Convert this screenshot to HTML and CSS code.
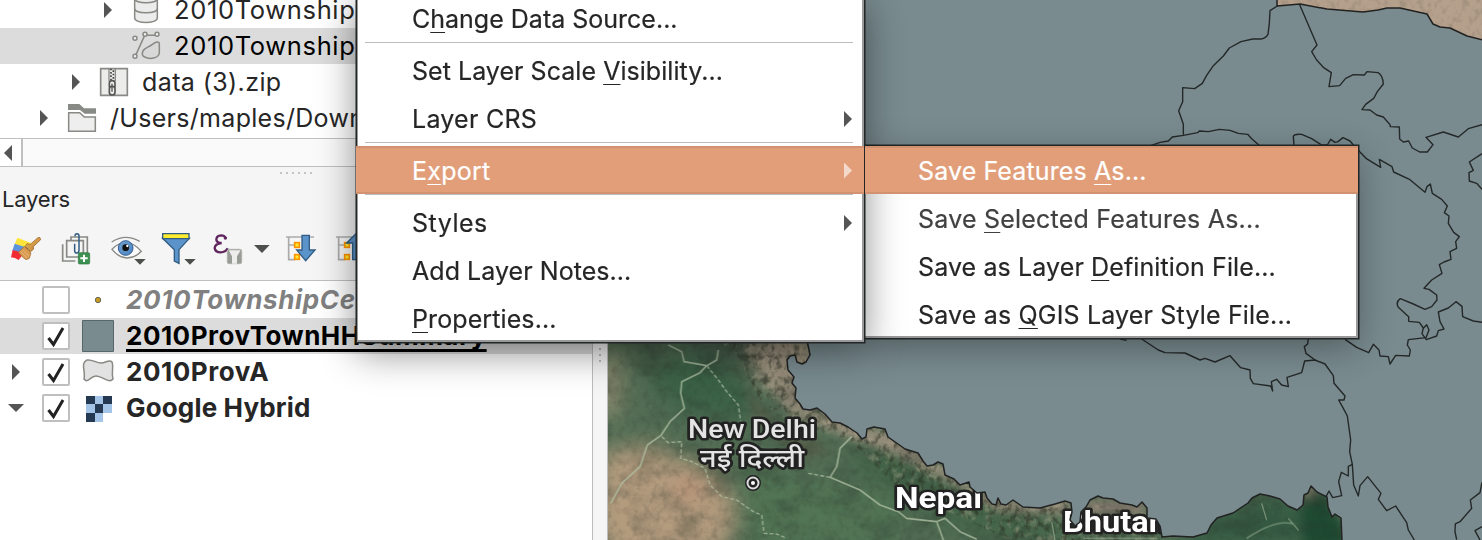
FILE: index.html
```
<!DOCTYPE html>
<html lang="en">
<head>
<meta charset="utf-8">
<title>Layers</title>
<link rel="stylesheet" href="styles.css">
</head>
<body>
<div class="app">
  <aside class="side">
    <div class="browser">
      <div class="row lv3"><i class="tri"></i>
        <svg class="ico" viewBox="0 0 84 84"><path d="M8 8v58c0 18 68 18 68 0V8" fill="#ececec" stroke="#888a85" stroke-width="4.5"/><path d="M8 8c0 16 68 16 68 0M8 38c0 16 68 16 68 0" fill="none" stroke="#888a85" stroke-width="4.5"/></svg>
        <span class="t1">2010TownshipC</span></div>
      <div class="row lv3 sel"><i class="tri none"></i>
        <svg class="ico" viewBox="0 0 84 84"><g fill="#eee" stroke="#888a85" stroke-width="4.5"><path d="M11 70L38 10H72" fill="none"/><circle cx="9" cy="19" r="6"/><circle cx="9" cy="73" r="6"/><circle cx="39" cy="7" r="6"/><circle cx="75" cy="7" r="6"/><path fill="#d8d8d8" d="M32 59C36 47 49 47 61 37C70 30 82 25 82 37V63C80 79 53 83 38 75C30 71 30 65 32 59Z"/></g></svg>
        <span class="t1">2010TownshipC</span></div>
      <div class="row lv2"><i class="tri"></i>
        <svg class="ico" viewBox="0 0 84 84"><path d="M2 2h80v80H2z" fill="#ececea" stroke="#888a85" stroke-width="5"/><path d="M27 2v38M46 2v38" stroke="#888a85" stroke-width="4"/><path d="M33 2v38" stroke="#444" stroke-width="5" stroke-dasharray="5 5"/><path d="M40 7v33" stroke="#444" stroke-width="5" stroke-dasharray="5 5"/><g fill="#eee" stroke="#555753" stroke-width="5"><rect x="28" y="38" width="17" height="24" rx="8"/><rect x="28" y="55" width="17" height="26" rx="8"/></g><path d="M36 47v24" stroke="#555" stroke-width="4"/></svg>
        <span class="t2">data (3).zip</span></div>
      <div class="row lv1"><i class="tri"></i>
        <svg class="ico" viewBox="0 0 84 84"><path d="M0 0h34l14 13h36v16H50L36 18H0z" fill="#888a85"/><path d="M2 26h33l14 13h33v43H2z" fill="#eee" stroke="#888a85" stroke-width="4.5"/></svg>
        <span class="t3">/Users/maples/Down</span></div>
    </div>
    <div class="scroll"><div class="scroll-btn"><i class="tri left"></i></div></div>
    <div class="dots"></div>
    <h2>Layers</h2>
    <div class="tools">
      <svg viewBox="0 0 540 150" width="180" height="50">
        <defs>
          <linearGradient id="bl" x2="1" y2="1"><stop offset="0" stop-color="#729fcf"/><stop offset="1" stop-color="#4a86c0"/></linearGradient>
          <linearGradient id="br" x2="1" y2="1"><stop offset="0" stop-color="#e8b868"/><stop offset="1" stop-color="#bf7c2c"/></linearGradient>
        </defs>
        <path d="M52 38L94 54L82 74L44 58z" fill="#ffe53b"/><path d="M44 56L84 69L76 87L37 77z" fill="#5b94dc"/><path d="M38 75L72 84L56 105Q45 98 33 97z" fill="#f22c35"/>
        <path d="M120 38Q114 36 110 41L91 58L81 56L76 64L92 80L101 72L100 65L122 44Z" fill="url(#br)" stroke="#8d5717" stroke-width="2"/><path d="M73 64L93 84L88 100L78 104Q66 97 55 82z" fill="#d99b52" stroke="#9b632b" stroke-width="2"/><path d="M62 80L81 99M69 76L87 94" stroke="#f0c58a" stroke-width="2"/>
        <g fill="#f5f5f5" stroke="#888a85" stroke-width="5"><path d="M188 58v50h38" fill="none"/><path d="M213 36h49v52h-49z"/><path d="M200 47h50v49h-50z"/></g>
        <path d="M224 56v21q0 7 6 7t7-7V33q0-7-6-7t-6 8" fill="none" stroke="#315d84" stroke-width="4.5"/>
        <rect x="235" y="83" width="34" height="34" rx="4" fill="#3d9150" stroke="#2a763e" stroke-width="2"/><path d="M252 89v22M241 100h22" stroke="#fff" stroke-width="6"/>
        <path d="M336 73Q355 53 378 53T424 79Q405 99 381 99T336 73Z" fill="#fafafa" stroke="#888a85" stroke-width="4"/><path d="M335 51Q375 24 419 49" fill="none" stroke="#888a85" stroke-width="4"/><circle cx="377" cy="69" r="22" fill="url(#bl)" stroke="#315d94" stroke-width="3"/><circle cx="377" cy="68" r="10" fill="#111"/><circle cx="382" cy="63" r="3.5" fill="#fff"/><path d="M403 102h34l-17 17z" fill="#4c4f4c"/>
      </svg>
      <svg viewBox="0 0 540 150" width="180" height="50">
        <path d="M-52 40H28L-3 74V115L-17 108V74Z" fill="#5b94ca" stroke="#315d84" stroke-width="4"/><path d="M-52 26h79v15h-79z" fill="#fcec2d" stroke="#315d84" stroke-width="4"/><path d="M13 102h34l-17 17z" fill="#4c4f4c"/>
        <path d="M137 41Q135 31 123 31Q109 32 109 44Q110 54 125 54Q105 56 104 69Q106 82 122 82Q137 82 143 70" fill="none" stroke="#62265f" stroke-width="7"/><circle cx="136" cy="39" r="5" fill="#62265f"/>
        <rect x="142" y="73" width="43" height="43" rx="5" fill="#999b97" stroke="#adafaa" stroke-width="3"/><path d="M146 76h36L171 94v22h-15V94z" fill="#ededeb"/>
        <path d="M222 60h47l-23 24z" fill="#4c4f4c"/>
        <g id="tree"><path d="M318 36h84M326 36v68h19M326 60h20" fill="none" stroke="#aaa" stroke-width="5"/><rect x="344" y="53" width="14" height="14" fill="#fcec2d" stroke="#ff9200" stroke-width="5"/><rect x="344" y="89" width="14" height="14" fill="#fcec2d" stroke="#ff9200" stroke-width="5"/></g>
        <path d="M366 31h22v44h17l-28 32-27-32h16z" fill="#5b94ca" stroke="#315d84" stroke-width="4"/>
        <use href="#tree" x="150"/><path d="M500 54l28-28 28 28h-16v50h-22V54z" fill="#5b94ca" stroke="#315d84" stroke-width="4"/>
      </svg>
    </div>
    <div class="layers">
      <div class="lrow"><i class="arr"></i><span class="box"></span>
        <svg class="sym" viewBox="0 0 32 32"><circle cx="16" cy="16" r="2.7" fill="#c99c20" stroke="#676756"/></svg>
        <span class="off">2010TownshipCe</span></div>
      <div class="lrow sel"><i class="arr"></i><span class="box"><svg viewBox="0 0 28 28"><path d="M6.5 16l5 6.5L21 6" /></svg></span>
        <svg class="sym" viewBox="0 0 32 32"><path d="M.5.5h31v31H.5z" fill="#798b8f" stroke="#56676c"/></svg>
        <span class="cur">2010ProvTownHHSummary</span></div>
      <div class="lrow"><i class="arr"><i class="tri"></i></i><span class="box"><svg viewBox="0 0 28 28"><path d="M6.5 16l5 6.5L21 6" /></svg></span>
        <svg class="sym" viewBox="0 0 32 32"><path d="M5 4C10 3 14 7 19 7S27 3 30 6C32 11 29 17 31 23C27 28 20 20 14 20S6 28 2 23C4 16-2 7 5 4Z" fill="#e2e2e2" stroke="#888a85" stroke-width="1.5"/></svg>
        <span class="provA">2010ProvA</span></div>
      <div class="lrow"><i class="arr"><i class="tri down"></i></i><span class="box"><svg viewBox="0 0 28 28"><path d="M6.5 16l5 6.5L21 6" /></svg></span>
        <svg class="sym" viewBox="0 0 32 32"><path d="M4 4h26v17H21v9H4z" fill="#a5c5e8"/><path d="M4 4h9v8H4zM21 4h9v8h-9zM13 12h8v9h-8zM4 21h9v9H4z" fill="#253a52"/></svg>
        <span class="hyb">Google Hybrid</span></div>
    </div>
  </aside>
  <div class="split"><i></i></div>
  <main class="map">
    <svg width="874" height="540" viewBox="608 0 874 540">
      <defs>
        <filter id="soft" x="-30%" y="-30%" width="160%" height="160%" color-interpolation-filters="sRGB"><feGaussianBlur stdDeviation="11"/></filter>
        <filter id="soft2" x="-30%" y="-30%" width="160%" height="160%" color-interpolation-filters="sRGB"><feGaussianBlur stdDeviation="5"/></filter>
        <filter id="grain" x="0" y="0" width="100%" height="100%" color-interpolation-filters="sRGB"><feTurbulence type="fractalNoise" baseFrequency=".03 .045" numOctaves="5" seed="7"/><feColorMatrix values="0 0 0 0 .14  0 0 0 0 .18  0 0 0 0 .15  3 0 0 0 -1.3"/></filter>
        <filter id="grain2" x="0" y="0" width="100%" height="100%" color-interpolation-filters="sRGB"><feTurbulence type="fractalNoise" baseFrequency=".13 .11" numOctaves="4" seed="3"/><feColorMatrix values="0 0 0 0 .74  0 0 0 0 .7  0 0 0 0 .6  0 3 0 0 -1.5"/></filter>
        <filter id="grain3" x="0" y="0" width="100%" height="100%" color-interpolation-filters="sRGB"><feTurbulence type="fractalNoise" baseFrequency=".16 .13" numOctaves="3" seed="12"/><feColorMatrix values="0 0 0 0 .17  0 0 0 0 .19  0 0 0 0 .14  0 0 3.4 0 -1.6"/></filter>
        <clipPath id="hills"><path d="M705 330H820V395L890 430L960 480L1060 500L1160 515V540H1010L900 490L850 440L790 425L760 400L740 360Z"/></clipPath>
      </defs>
      <path d="M608 330H1350V540H608z" fill="#526d54"/>
      <g filter="url(#soft)">
        <ellipse cx="665" cy="515" rx="72" ry="58" fill="#af987b"/>
        <path d="M600 452l50-8 50 26 25 80H600z" fill="#b39b7e"/>
        <ellipse cx="690" cy="488" rx="14" ry="10" fill="#bd9077"/>
        <ellipse cx="610" cy="385" rx="13" ry="36" fill="#918f73"/>
        <path d="M645 372L700 350L750 385L760 420L680 412z" fill="#3a6146"/>
        <path d="M740 330H820V400L760 385z" fill="#958b78"/>
        <path d="M740 465L900 500V550H750z" fill="#527555"/>
        <path d="M860 440L990 490L1100 540H980L850 470z" fill="#446549"/>
        <path d="M1190 520l100-30 50 60H1180z" fill="#365c44"/>
        <ellipse cx="725" cy="350" rx="30" ry="16" fill="#465c4b"/>
      </g>
      <g filter="url(#soft2)">
        <path d="M745 345L800 350L800 405L840 420L900 436L960 480L1010 500L1070 500V514L1000 512L945 480L890 452L840 434L790 414Z" fill="#978d7b"/>
        <path d="M745 385l30 36 60 30 -30 8-50-35z" fill="#56624c"/>
        <path d="M1085 500h60v15h-60z" fill="#8a7f72"/>
        <path d="M1300 510l20-22 25 40v20h-40z" fill="#1f4a32"/>
        <path d="M1305 485h12v14h-14z" fill="#777160"/>
      </g>
      <path d="M608 330H1350V540H608z" filter="url(#grain)" opacity=".25"/>
      <path d="M608 330H1350V540H608z" filter="url(#grain3)" opacity=".13"/>
      <g clip-path="url(#hills)"><path d="M608 330H1350V540H608z" filter="url(#grain2)" opacity=".4"/><path d="M608 330H1350V540H608z" filter="url(#grain3)" opacity=".5"/></g>
      <g>
        <path d="M1270 0h212v45h-212z" fill="#b5a08c"/><path d="M1270 0h212v45h-212z" filter="url(#grain3)" opacity=".12"/>
      </g>
      <g transform="translate(590 330) scale(.33333)" fill="none" stroke="#b4c4a8" stroke-width="5" stroke-linejoin="round" opacity=".75">
        <path d="M235 45L275 65L282 95L350 107L380 90L385 60M350 107L330 128L275 155L272 190L283 235L240 275L212 317L172 345L150 410L95 460L62 520"/>
        <path d="M350 107L385 150L410 185L445 225L452 275M215 320L235 338L275 335L272 385L305 395L345 415L360 465L395 500L440 510L490 545L515 555L522 610L560 612L590 625M655 430L720 442" stroke-dasharray="12 6" stroke-width="4"/>
        <path d="M785 320L750 355L740 410L720 442L810 480L870 525L925 545L950 565L1040 575L1065 565L1110 605L1160 628M1040 575L1060 630"/>
        <path d="M1385 575L1395 630M1970 625Q2060 565 2110 582L2125 600L2095 565M2015 520L2030 570M1480 625H1700" stroke-width="4" opacity=".7"/>
      </g>
      <g class="place" text-anchor="middle">
        <text x="752" y="438" font-size="25" textLength="128" lengthAdjust="spacingAndGlyphs">New Delhi</text>
        <text x="752" y="467" font-size="25" textLength="104" lengthAdjust="spacingAndGlyphs">नई दिल्ली</text>
        <g class="country"><text x="938.5" y="507.5" font-size="30" textLength="87" lengthAdjust="spacingAndGlyphs">Nepal</text>
        <text x="1115" y="531.5" font-size="29" textLength="104" lengthAdjust="spacingAndGlyphs">Bhutan</text></g>
      </g>
      <circle cx="753" cy="483" r="6" fill="#222" stroke="#222" stroke-width="4"/><circle cx="753" cy="483" r="5.5" fill="#222" stroke="#ddd" stroke-width="2"/><circle cx="753" cy="483" r="2" fill="#fff"/>
      <path class="land" d="M807 340L810 355 806 362 802 364 797 362 795 355 790 356 787 360 788 370 794 377 792 383 796 388 795 398 800 404 803 409 810 410 817 408 825 414 832 422 840 423 848 427 857 433 862 439 866 437 867 429 874 427 885 429 888 437 898 444 905 449 918 453 923 461 927 466 933 465 938 462 943 464 945 475 954 479 960 485 969 482 970 487 977 493 985 492 987 498 992 504 996 505 998 498 1001 504 1006 505 1013 500 1023 507 1040 508 1055 504 1065 501 1071 503 1072 512 1070 520 1075 526 1080 522 1081 512 1086 507 1090 500 1098 496 1103 498 1113 499 1120 503 1132 505 1137 507 1142 502 1147 508 1147 518 1156 519 1160 526 1162 537 1173 536 1193 537 1207 533 1211 525 1217 518 1233 513 1248 503 1252 498 1260 494 1270 496 1280 499 1288 506 1297 510 1303 505 1304 495 1308 493 1311 486 1317 492 1327 497 1328 507 1332 517 1335 514 1341 518 1342 541H1483V40L1467 36 1450 28 1440 27 1433 24 1427 14 1400 8 1387 8 1378 10 1363 12 1327 9 1300 4 1277 6V-2H600V340Z"/>
      <g class="border">
        <g transform="translate(1160) scale(.33333)">
          <path d="M352 18L330 32 328 70 324 103Q316 116 302 117L278 117 243 125 208 144 190 168 160 197 140 226 127 250 104 266 68 263V305L56 332 70 373V404M418 12L471 135 455 155 470 180 490 202 514 218 507 260 539 257 557 235 580 224 613 225 621 215 654 218Q668 225 670 252L652 275 641 295 617 313 606 329 630 330 650 345 670 351 690 374 691 380 718 381 719 417 730 426 746 423 757 444 779 456 802 456 819 434 798 412 850 396 895 411 925 386 966 374"/>
          <path d="M-100 462L0 427 25 423 37 411 70 406 113 398 118 393 145 395 178 388 210 391 235 400 263 403 275 416 300 438M402 438L400 409Q402 401 425 403L455 416 485 435 502 435 512 418 525 427 534 425 549 413 570 423 583 438 600 455"/>
        </g>
        <g transform="translate(1340 130) scale(.33333)">
          <path d="M60 66L78 85 122 112 118 88 156 110 161 126 210 149 255 187 261 170 271 162 277 190 305 208 322 228 313 248 327 258 325 280 341 307 358 320 347 335 350 355 330 365 333 388 312 396 298 404 306 430 275 450 252 475 267 478 290 495 291 510 275 530 255 538 220 522 181 506Q166 516 175 532L206 560V574L238 577 250 594 246 611 259 629 290 618 295 602 312 597 300 575 295 546 325 534 348 515 366 529 368 560 400 573 426 577"/>
          <path d="M250 595L260 584 267 600 258 623 205 629 202 645 211 660 208 678 167 676 150 702 145 680 120 678 117 660 100 643 86 668 50 652 15 628M426 71L388 96 400 121 387 128 388 153 410 160 426 178"/>
        </g>
        <g transform="translate(1030 330) scale(.33333)">
          <path d="M270 27L290 31M335 27L385 60 405 68 465 69 510 90 525 85 555 96 600 77 632 113 660 120 661 145 670 161 722 168 728 183 724 155 740 148 755 165 775 170 771 142 815 128 824 93 855 90 885 102 910 137 912 160 945 198 942 210 926 210 940 235 952 258 962 330 959 365 967 403 971 465 985 498 990 467 1013 440 1053 490 1045 508 1070 542 1097 528 1130 578 1135 600 1153 630"/>
          <path d="M835 25L833 42 823 50 828 70 855 90M967 403L955 409 955 438 934 427 926 455 935 497 908 503 897 483 888 500M1356 457L1350 488 1321 510 1325 535 1290 575 1276 582 1275 605 1280 629M1356 590L1335 602 1350 630"/>
        </g>
      </g>
    </svg>
  </main>
</div>

<div class="menu sub">
  <div class="item hot"><span class="s1">Save Features <u>A</u>s...</span></div>
  <div class="item dim"><span class="s2">Save <u>S</u>elected Features As...</span></div>
  <div class="item"><span class="s3">Save as Layer <u>D</u>efinition File...</span></div>
  <div class="item"><span class="s4">Save as <u>Q</u>GIS Layer Style File...</span></div>
</div>
<div class="menu main">
  <div class="item"><span class="m1">C<u>h</u>ange Data Source...</span></div>
  <hr>
  <div class="item"><span class="m2">Set Layer Scale <u>V</u>isibility...</span></div>
  <div class="item"><span class="m3">Layer CRS</span><i class="tri"></i></div>
  <hr>
  <div class="item hot"><span class="m4">E<u>x</u>port</span><i class="tri"></i></div>
  <hr>
  <div class="item"><span class="m5">Styles</span><i class="tri"></i></div>
  <div class="item"><span class="m6">Add Layer Notes...</span></div>
  <div class="item"><span class="m7"><u>P</u>roperties...</span></div>
</div>
</body>
</html>
```
FILE: styles.css
```
* { box-sizing: border-box; }
body { margin: 0; width: 1482px; height: 540px; overflow: hidden; position: relative; font: 25px/36px Inter, "Liberation Sans", sans-serif; color: #262626; background: #f5f5f5; }
.app { display: grid; grid-template-columns: 592px 16px 874px; height: 540px; }
.side { overflow: hidden; display: flex; flex-direction: column; white-space: nowrap; }
.side > * { flex: none; }
.browser { height: 138px; background: #fff; overflow: hidden; }
.browser .row:first-child { margin-top: -8px; }
.row { display: flex; align-items: center; height: 36px; }
.sel { background: #dcdcdc; color: #000; }
.lv3 { padding-left: 104px; }
.lv2 { padding-left: 72px; }
.lv1 { padding-left: 40px; }
.t1 { font-size: 25.5px; letter-spacing: .65px; }
.t2 { letter-spacing: .4px; }
.t3 { letter-spacing: .3px; }
.tri { display: block; flex: none; width: 8px; height: 16px; background: #555; clip-path: polygon(0 0, 100% 50%, 0 100%); }
.tri.none { visibility: hidden; }
.tri.left { clip-path: polygon(100% 0, 0 50%, 100% 100%); }
.tri.down { width: 16px; height: 8px; clip-path: polygon(0 0, 100% 0, 50% 100%); }
.ico { width: 28px; height: 28px; margin: 0 14px 0 20px; overflow: visible; }
.scroll { height: 29px; border-top: 1px solid #bfbfbf; border-bottom: 1px solid #bfbfbf; background: #fafafa; }
.scroll-btn { width: 23px; height: 27px; border-right: 2px solid #bfbfbf; padding: 6px 0 0 4px; background: #fff; }
.dots { width: 34px; height: 2px; margin: 5px 0 0 280px; background: repeating-linear-gradient(90deg, #c4c4c4 0 2px, transparent 2px 6px); }
h2 { margin: 8px 0 0 2px; font-size: 22px; line-height: 34px; font-weight: 400; letter-spacing: -.2px; }
.tools { height: 55px; margin-top: 9px; display: flex; }
.tools svg { display: block; overflow: visible; }
.layers { flex: 1 0 0; border-top: 1px solid #bfbfbf; background: #fff; font-weight: 700; padding-top: 1px; }
.lrow { display: flex; align-items: center; height: 36px; font-size: 26px; }
.arr { width: 42px; display: flex; flex: none; padding-left: 12px; }
.arr .down { margin-left: -4px; }
.box { width: 28px; height: 28px; border: 2px solid #bfbfbf; border-radius: 2px; background: #fff; flex: none; }
.box svg { display: block; margin: -2px; width: 28px; height: 28px; fill: none; stroke: #222; stroke-width: 3; }
.sym { width: 32px; height: 32px; margin: 0 12px; flex: none; }
.off { font-style: italic; color: #808080; letter-spacing: .65px; }
.cur { letter-spacing: .5px; text-decoration: underline; text-decoration-thickness: 3px; text-underline-offset: 4px; text-decoration-skip-ink: none; }
.provA { letter-spacing: .55px; }
.hyb { letter-spacing: .15px; }
.split { border: solid #bcbcbc; border-width: 0 1px; display: flex; justify-content: center; padding-top: 348px; }
.split i { width: 2px; height: 15px; background: repeating-linear-gradient(#bbb 0 2px, transparent 2px 6px); }
.map { overflow: hidden; }
.map > svg { display: block; }
.land { fill: #798b8f; stroke: #222; stroke-width: 1.5; stroke-linejoin: round; }
.border { fill: none; stroke: #242828; stroke-width: 4.2; stroke-linejoin: round; }
.place { font-family: Roboto, "Noto Sans", sans-serif; font-weight: 500; fill: #e4e4e4; stroke: #222; stroke-width: 5px; paint-order: stroke; stroke-linejoin: round; }
.country { font-weight: 700; fill: #fff; }

.menu { position: absolute; background: #fff; white-space: nowrap; }
.menu::after { content: ""; position: absolute; inset: 0; border: solid #00000066; border-width: 0 2px 2px; pointer-events: none; }
.main { left: 357px; top: -6px; width: 507px; height: 348px; box-shadow: 0 0 0 1.5px #222627, 0 10px 36px #0007; }
.main::after { border-width: 0 2px 2px 1px; }
.sub { left: 865px; top: 146px; width: 493px; height: 192px; box-shadow: 0 0 0 1.5px #222627, 0 10px 34px #0005; }
.sub::after { border-left: 0; }
.item { height: 48px; display: flex; align-items: center; justify-content: space-between; padding: 3px 13px 1px 55px; -webkit-text-stroke: .2px; }
.sub .item { padding-left: 53px; }
.item .tri { margin-right: -1px; }
.hot { position: relative; z-index: 1; background: #e19e79; color: #fff; border: solid #d1926f; border-width: 2px 0; padding-top: 1px; padding-bottom: 0; }
.hot .tri { background: #f4d9ca; }
.dim { color: #414141; }
.main .hot { margin-left: -1px; padding-left: 56px; }
.m2 { letter-spacing: .04px; }
.m3 { letter-spacing: .25px; }
.m4 { letter-spacing: .25px; }
.m5 { letter-spacing: .5px; }
.m6 { letter-spacing: .05px; }
.m7 { letter-spacing: .1px; }
.s1 { letter-spacing: .12px; }
.s2 { letter-spacing: .22px; }
.s3 { letter-spacing: .11px; }
.s4 { letter-spacing: .17px; }
u { text-decoration-thickness: 1px; text-underline-offset: 4px; text-decoration-skip-ink: none; }
hr { height: 4px; margin: 0 11px 0 8px; border: 0; border-top: 1px solid #bcbcbc; }
```
